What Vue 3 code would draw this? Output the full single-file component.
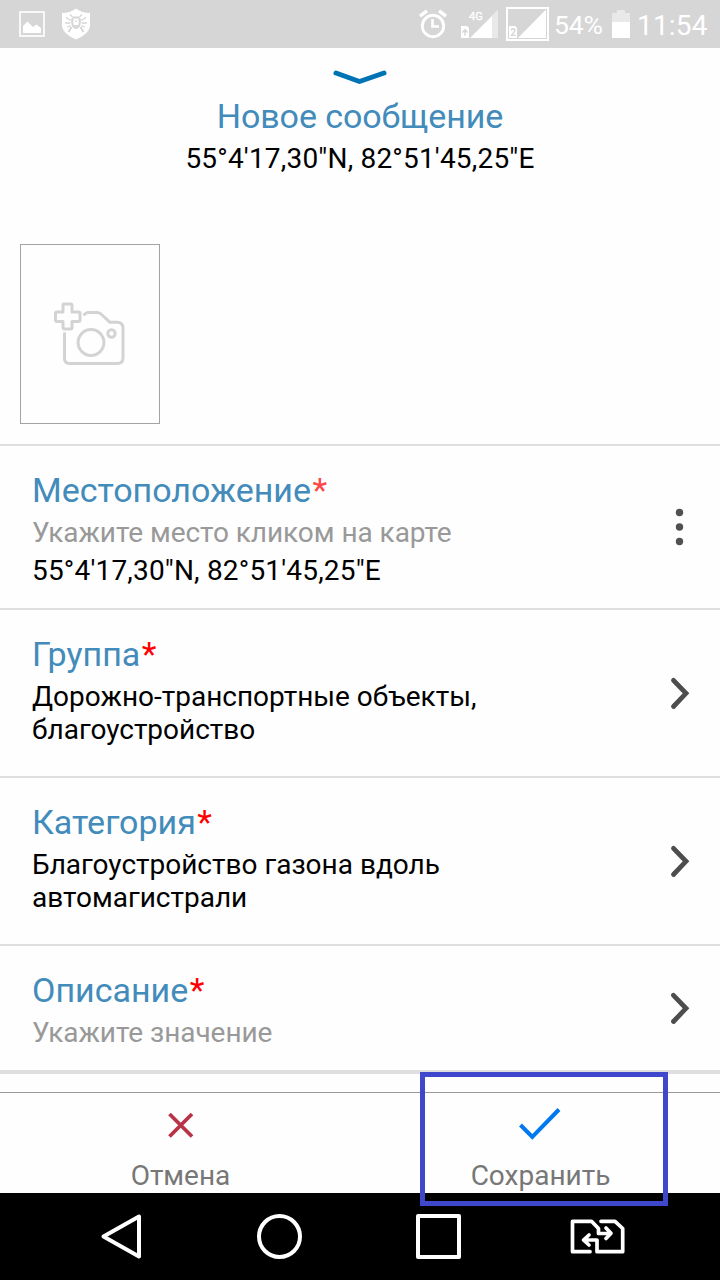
<script setup>
const rows = [
  { label: 'Местоположение', hint: 'Укажите место кликом на карте', value: ['55°4\'17,30"N, 82°51\'45,25"E'], icon: 'dots', soft: true },
  { label: 'Группа', value: ['Дорожно-транспортные объекты,', 'благоустройство'], icon: 'arrow', tall: true },
  { label: 'Категория', value: ['Благоустройство газона вдоль', 'автомагистрали'], icon: 'arrow', tall: true },
  { label: 'Описание', hint: 'Укажите значение', value: [], icon: 'arrow' },
]
</script>

<template>
  <div class="screen">
    <div class="status">
      <svg class="left" width="100" height="48" viewBox="0 0 100 48">
        <rect x="20" y="12" width="24" height="24" fill="none" stroke="#f8f8f8" stroke-width="2" />
        <path d="M23 33V26L27.500 21.500L33 27L36.500 24.500L41 28V33Z" fill="#fff" />
        <path d="M76 8.500Q82 13 90 13V26Q89 34 76 39.500Q63 34 62 26V13Q70 13 76 8.500Z" fill="#fff" />
        <g fill="none" stroke="#d6d6d6" stroke-width="1.300">
          <path d="M70 14.500L72.500 17M82 14.500L79.500 17M66 17.500L71 20.500M86 17.500L81 20.500M65 23H70.500M87 23H81.500M67 27L71 25.500M85 27L81 25.500" />
          <path d="M68.500 32L71.500 27M83.500 32L80.500 27" stroke-width="2" />
          <path d="M72.500 17.500H79.500" stroke-width="2" />
          <path d="M72.500 18Q71.500 22 73 26Q76 30 79 26Q80.500 22 79.500 18" stroke-width="2" />
          <path d="M74.500 20.500L76 22L77.500 20.500" stroke-width="1" />
        </g>
        <path d="M74 25H78L77 28.500H75Z" fill="#d6d6d6" />
      </svg>
      <svg class="signals" width="155" height="48" viewBox="400 0 155 48">
        <circle cx="433" cy="26" r="10.700" fill="none" stroke="#fff" stroke-width="2.900" />
        <path d="M432.500 19V26.500H439" fill="none" stroke="#fff" stroke-width="2.600" />
        <path d="M420 16.200L427 10.800M439 10.800L446 16.200" fill="none" stroke="#fff" stroke-width="3.400" />
        <path d="M492 15.500L498 9.500V38H492Z" fill="#e9e9e9" />
        <path d="M470 38L492 16V38Z" fill="#fff" />
        <path d="M461 38V26H467L469 28V38Z" fill="#fff" />
        <path d="M465 35.500V30M462.300 32.500L465 29.800L467.700 32.500" fill="none" stroke="#d6d6d6" stroke-width="1.500" />
        <text x="469" y="20" class="net">4G</text>
        <rect x="507" y="8" width="41" height="32" fill="none" stroke="#fff" stroke-width="2" />
        <path d="M518 38L546 9.500V38Z" fill="#fff" />
        <path d="M509 38V26H515L517 28V38Z" fill="#fff" />
        <text x="510.300" y="36.300" class="sim">2</text>
      </svg>
      <span class="percent">54%</span>
      <svg class="battery" width="18" height="48" viewBox="0 0 18 48">
        <path d="M5 10H13V13H18V22H0V13H5Z" fill="#e9e9e9" />
        <path d="M0 22H18V38H0Z" fill="#fff" />
      </svg>
      <span class="clock">11:54</span>
    </div>

    <header class="head">
      <svg class="collapse" width="56" height="20" viewBox="0 0 56 20">
        <path d="M4 5L27.500 13.500L52 5" fill="none" stroke="#0073b4" stroke-width="5" stroke-linecap="round" stroke-linejoin="round" />
      </svg>
      <div class="label title">Новое сообщение</div>
      <div class="text coords">55°4'17,30"N, 82°51'45,25"E</div>
      <div class="photo">
        <svg width="138" height="178" viewBox="21 245 138 178" fill="none" stroke="#d3d3d3" stroke-width="3" stroke-linecap="round" stroke-linejoin="round">
          <path d="M64 304H70.500Q72 304 72 305.500V312H78.500Q80 312 80 313.500V320Q80 321.500 78.500 321.500H72V327.500Q72 329 70.500 329H64.500Q63 329 63 327.500V321.500H57Q55.500 321.500 55.500 320V313.500Q55.500 312 57 312H63V305.500Q63 304 64 304Z" />
          <path d="M84.500 314.500Q86 312.500 88 312.500H97Q99 312.500 101 314L110 322.300H117Q123 322.500 123 328V358Q123 363.500 117.500 363.500H69.500Q64.500 363.500 64.500 358V333.500" />
          <circle cx="91" cy="342.500" r="12.900" />
          <circle cx="111.500" cy="333.500" r="3.700" />
        </svg>
      </div>
    </header>

    <section v-for="row in rows" :key="row.label" class="row" :class="{ tall: row.tall }">
      <div class="body">
        <div class="label">{{ row.label }}<span class="star" :class="{ soft: row.soft }">*</span></div>
        <div v-if="row.hint" class="text hint">{{ row.hint }}</div>
        <div v-if="row.value.length" class="text value" :class="{ numeric: row.hint }">
          <div v-for="line in row.value" :key="line">{{ line }}</div>
        </div>
      </div>
      <svg v-if="row.icon === 'dots'" width="24" height="40" viewBox="0 0 24 40" fill="#505050">
        <circle cx="11.500" cy="5.500" r="3.700" /><circle cx="11.500" cy="20" r="3.700" /><circle cx="11.500" cy="34.500" r="3.700" />
      </svg>
      <svg v-else width="24" height="40" viewBox="0 0 24 40">
        <path d="M5.500 7.300L18 20.300L5.500 33.500" fill="none" stroke="#4d4d4d" stroke-width="4.800" stroke-linecap="round" />
      </svg>
    </section>

    <footer class="actions">
      <div class="action">
        <svg width="44" height="40" viewBox="0 0 44 40">
          <path d="M11.500 9L34 31.500M34 9L11.500 31.500" fill="none" stroke="#b93347" stroke-width="3.800" />
        </svg>
        <span class="text">Отмена</span>
      </div>
      <div class="action">
        <svg width="44" height="40" viewBox="0 0 44 40">
          <path d="M2.500 20L14.300 32L41 4.500" fill="none" stroke="#0078ee" stroke-width="4" />
        </svg>
        <span class="text">Сохранить</span>
        <div class="highlight"></div>
      </div>
    </footer>

    <nav class="nav">
      <svg width="720" height="87" viewBox="0 1193 720 87" fill="none" stroke="#fff" stroke-width="4" stroke-linejoin="round" stroke-linecap="round">
        <path d="M139 1216.500V1256.500L103.500 1236.500Z" />
        <circle cx="279.500" cy="1236.500" r="20.500" />
        <rect x="418" y="1216" width="41" height="41" />
        <path stroke-width="3.700" d="M590 1251.700H572.500V1221.300H591.500L598.500 1228.500V1233.500H610M606 1228L611 1233.200L606 1238.500M601 1221.300H615L622.700 1228.500V1251.700H597V1240H585M589 1235L583.500 1240L589 1245" />
      </svg>
    </nav>
  </div>
</template>

<style>
body { margin: 0; }
</style>

<style scoped>
.screen {
  width: 720px;
  height: 1280px;
  overflow: hidden;
  background: #fefefe;
  font-family: Roboto, "Liberation Sans", sans-serif;
  color: #000;
  display: flex;
  flex-direction: column;
}
.screen > * { flex-shrink: 0; box-sizing: border-box; }
svg { display: block; flex-shrink: 0; }
.status {
  height: 48px;
  background: #d6d6d6;
  color: #fff;
  display: flex;
}
.left { margin-right: 300px; }
.net { font-size: 11px; fill: #fff; stroke: #fff; stroke-width: .3px; }
.sim { font-size: 10px; font-weight: 700; fill: #d6d6d6; }
.signals { margin-right: -1px; }
.percent { width: 58px; font-size: 26.500px; line-height: 50px; letter-spacing: -.1px; }
.clock { padding-left: 7px; font-size: 28px; line-height: 51px; white-space: nowrap; letter-spacing: .2px; }
.head {
  height: 396px;
  padding-top: 20px;
  display: flex;
  flex-direction: column;
  align-items: center;
}
.collapse { margin-bottom: 8px; }
.label { font-size: 34px; line-height: 40px; color: #428bba; white-space: nowrap; }
.title { letter-spacing: -.08px; }
.text { font-size: 28px; line-height: 33px; white-space: nowrap; }
.coords { margin-top: 6px; letter-spacing: .19px; }
.numeric { letter-spacing: .18px; }
.photo {
  width: 138px;
  height: 178px;
  border: 1px solid #a3a3a3;
  align-self: flex-start;
  margin: 69px 0 0 20px;
}
.row {
  border-top: 2px solid #dfdfdf;
  display: flex;
  align-items: center;
  justify-content: space-between;
  padding-right: 28px;
}
.body { padding: 24px 0 21px 32px; }
.tall .body { padding-bottom: 30px; }
.star { color: #f00; margin-left: 1.500px; }
.star.soft { color: #ff4545; }
.hint { margin-top: 6px; color: #999; letter-spacing: -.05px; }
.value { margin-top: 6px; }
.hint + .value { margin-top: 5px; }
.actions {
  height: 123px;
  border-top: 4px solid #dfdfdf;
  padding-top: 18px;
  display: grid;
  grid-template-columns: 1fr 1fr;
  color: #777;
}
.action {
  position: relative;
  border-top: 1px solid #999;
  padding-top: 12px;
  display: flex;
  flex-direction: column;
  align-items: center;
}
.action .text { margin-top: 14px; padding-left: 1px; }
.highlight {
  position: absolute;
  z-index: 2;
  left: 60px;
  top: -21px;
  width: 238px;
  height: 124px;
  border: 5px solid #3f48cc;
}
.nav { height: 87px; background: #000; }
</style>
